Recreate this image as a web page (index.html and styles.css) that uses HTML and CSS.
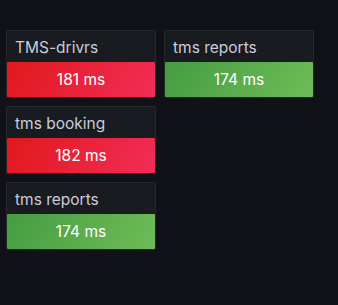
FILE: index.html
```html
<!DOCTYPE html>
<html lang="en">
<head>
    <meta charset="UTF-8">
    <meta name="viewport" content="width=device-width, initial-scale=1.0">
    <title>Response times</title>
    <link rel="stylesheet" href="styles.css">
</head>
<body>
    <div class="board">
        <div class="column">
            <div class="card">
                <div class="card-title">TMS-drivrs</div>
                <div class="card-value red">181 ms</div>
            </div>
            <div class="card">
                <div class="card-title">tms booking</div>
                <div class="card-value red">182 ms</div>
            </div>
            <div class="card">
                <div class="card-title">tms reports</div>
                <div class="card-value green">174 ms</div>
            </div>
        </div>
        <div class="column">
            <div class="card">
                <div class="card-title">tms reports</div>
                <div class="card-value green">174 ms</div>
            </div>
        </div>
    </div>
</body>
</html>
```

FILE: styles.css
```css
body {
    margin: 0;
    background-color: #111217;
    font-family: Inter, Roboto, "Liberation Sans", sans-serif;
}
.board {
    display: flex;
    align-items: flex-start;
    gap: 8px;
    padding: 30px 6px;
}
.column {
    display: flex;
    flex-direction: column;
    gap: 8px;
    width: 150px;
}
.card {
    height: 68px;
    box-sizing: border-box;
    background-color: #181b1f;
    border: 1px solid #25272c;
    border-radius: 2px;
    display: flex;
    flex-direction: column;
}
.card-title {
    height: 31px;
    box-sizing: border-box;
    padding: 2px 8px 0;
    display: flex;
    align-items: center;
    color: #ccccdc;
    font-size: 15.5px;
}
.card-value {
    flex: 1;
    display: flex;
    align-items: center;
    justify-content: center;
    color: #ffffff;
    font-size: 15.5px;
    font-weight: 400;
    border-radius: 1px;
}
.red {
    background: linear-gradient(120deg, #e0191c, #f22d57);
}
.green {
    background: linear-gradient(120deg, #469c43, #6ebc56);
}
```
